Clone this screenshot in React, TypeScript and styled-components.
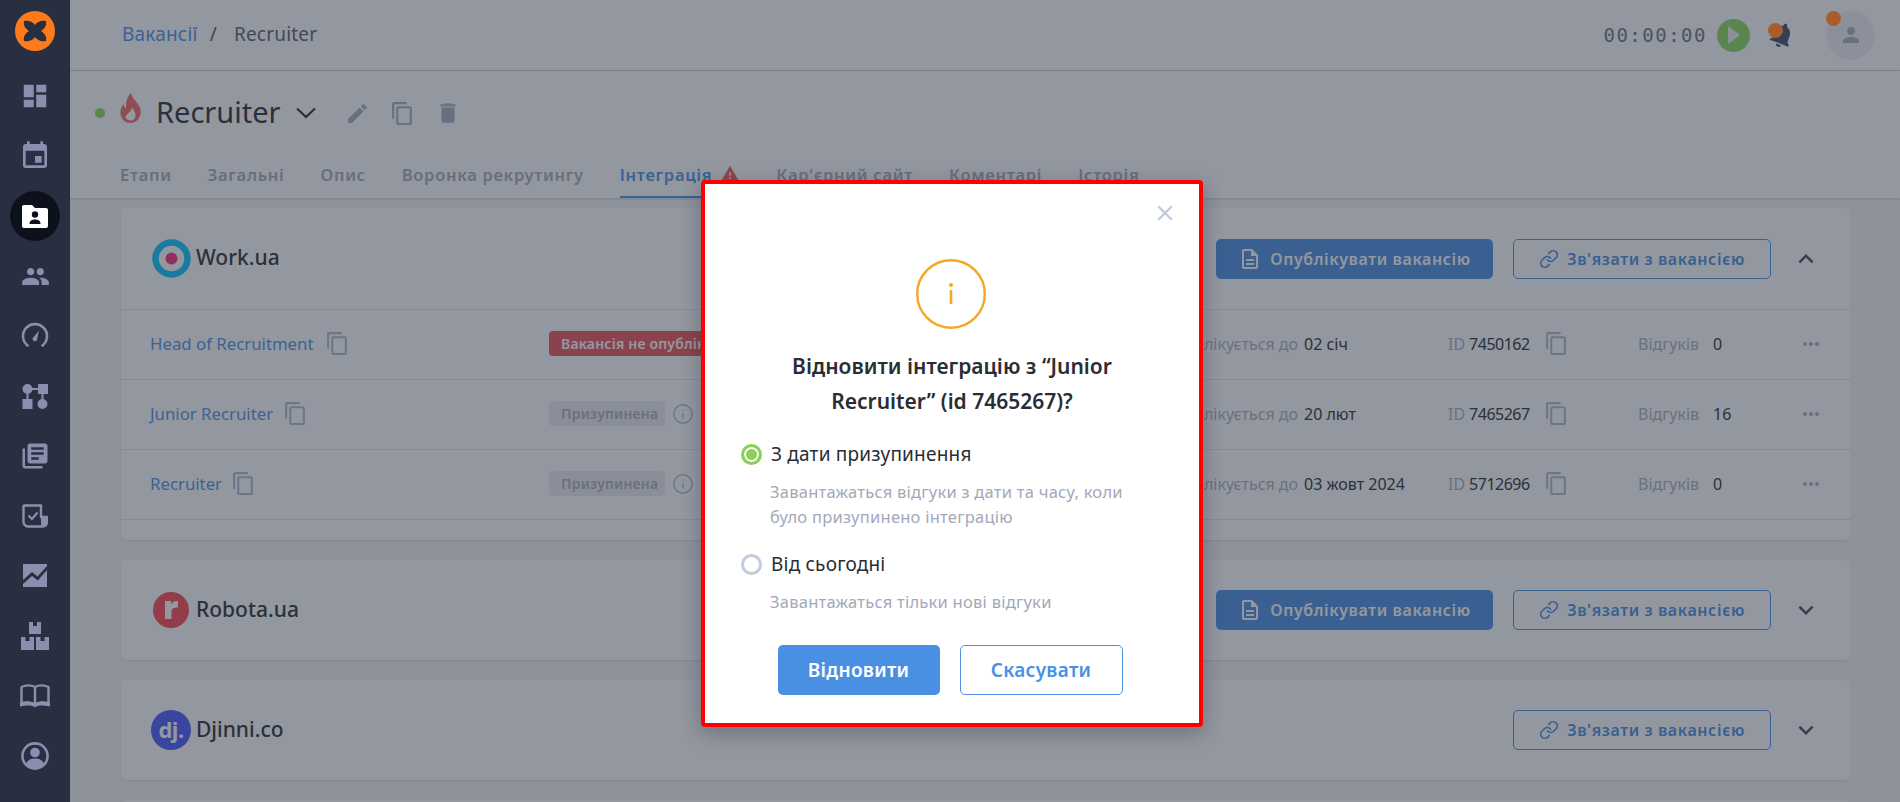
import React from "react";
import styled, { createGlobalStyle } from "styled-components";
import {
  MdDashboard, MdEvent, MdPeople, MdLibraryBooks,
  MdContentCopy, MdEdit, MdDelete, MdExpandMore, MdExpandLess, MdWarning, MdNotifications,
  MdPerson, MdOutlineDescription, MdMoreHoriz, MdClose,
} from "react-icons/md";
import { Link as LinkIcon, Info } from "lucide-react";

const FONT = `"Noto Sans", "Open Sans", sans-serif`;

const Global = createGlobalStyle`
  html, body { margin: 0; padding: 0; height: 100%; overflow: hidden; }
  body { font-family: ${FONT}; color: #2e3136; background: #f4f5f6; }
  * { box-sizing: border-box; }
`;

const Page = styled.div`
  position: relative;
  display: flex;
  width: 1900px;
  height: 802px;
  overflow: hidden;
`;

const Sidebar = styled.nav`
  position: relative;
  z-index: 4;
  flex: 0 0 70px;
  display: flex;
  flex-direction: column;
  align-items: center;
  background: #282f40;
  color: #8b8fad;
`;

const LogoWrap = styled.div`
  height: 66px;
  padding-top: 11px;
`;

const NavItem = styled.div<{ $active?: boolean }>`
  width: 50px;
  height: 50px;
  margin: 5px 0;
  flex: none;
  display: flex;
  align-items: center;
  justify-content: center;
  border-radius: 50%;
  background: ${(p) => (p.$active ? "#0d111c" : "transparent")};
  color: ${(p) => (p.$active ? "#ffffff" : "inherit")};
`;

const Main = styled.div`
  flex: 1;
  min-width: 0;
  display: flex;
  flex-direction: column;
`;

const TopBar = styled.header`
  flex: none;
  height: 71px;
  display: flex;
  align-items: center;
  padding: 0 25px 0 52px;
  background: #fff;
  border-bottom: 1px solid #d0d3dc;
`;

const Crumbs = styled.div`
  display: flex;
  align-items: center;
  font-size: 19px;
  letter-spacing: 0.2px;
  padding-bottom: 2px;
  flex: 1;
`;
const CrumbLink = styled.span`
  color: #4f94e8;
`;
const CrumbSep = styled.span`
  margin: 0 17px 0 12px;
  color: #555b6b;
`;
const CrumbCurrent = styled.span`
  color: #5d6372;
`;

const Timer = styled.span`
  font-family: "DejaVu Sans Mono", monospace;
  font-size: 19px;
  letter-spacing: 1.5px;
  color: #6e7482;
`;

const PlayButton = styled.div`
  width: 33px;
  height: 33px;
  margin-left: 10px;
  border-radius: 50%;
  background: #8edb5f;
  display: flex;
  align-items: center;
  justify-content: center;
  color: #eef1f2;
`;

const Bell = styled.div`
  position: relative;
  width: 30px;
  height: 32px;
  margin-left: 17px;
  color: #42506a;
  display: flex;
  align-items: center;
  justify-content: center;
  svg { transform: rotate(20deg); }
`;

const Dot = styled.span`
  position: absolute;
  z-index: 5;
  width: 15px;
  height: 15px;
  border-radius: 50%;
  background: #ab5c2d;
`;
const BellDot = styled(Dot)`
  left: 1px;
  top: 4px;
`;
const AvatarDot = styled(Dot)`
  left: 0;
  top: 0;
`;

const Avatar = styled.div`
  position: relative;
  width: 49px;
  height: 49px;
  margin-left: 29px;
  border-radius: 50%;
  background: #f0f1f4;
  color: #a9afbf;
  display: flex;
  align-items: center;
  justify-content: center;
`;

const TitleSection = styled.section`
  position: relative;
  flex: none;
  height: 127px;
  padding-top: 20px;
  background: #fff;
  box-shadow: 0 1px 3px rgba(30, 40, 60, 0.2);
`;

const TitleRow = styled.div`
  display: flex;
  align-items: center;
  height: 44px;
  padding-left: 25px;
`;

const StatusDot = styled.span`
  width: 10px;
  height: 10px;
  border-radius: 50%;
  background: #8edb5f;
`;

const Flame = styled.svg`
  margin: -10px 15px 0 15px;
  color: #f46a6c;
`;

const Title = styled.h1`
  margin: -2px 0 0;
  font-size: 29px;
  line-height: 44px;
  font-weight: 400;
  color: #2e3136;
`;

const TitleChevron = styled.svg`
  margin-left: 15px;
  margin-right: 29px;
`;

const TitleAction = styled.span`
  display: flex;
  margin-right: 20px;
  color: #a9afc0;
`;

const Tabs = styled.div`
  display: flex;
  gap: 36px;
  margin: 17px 0 0 50px;
  height: 46px;
`;

const Tab = styled.div<{ $active?: boolean }>`
  display: flex;
  align-items: center;
  gap: 8px;
  font-size: 16.5px;
  font-weight: 600;
  letter-spacing: 0.7px;
  color: ${(p) => (p.$active ? "#4f94e8" : "#a6acbd")};
  border-bottom: 2px solid ${(p) => (p.$active ? "#4f94e8" : "transparent")};
`;

const WarningMark = styled.span`
  display: flex;
  color: #ff5a5a;
`;

const Content = styled.div`
  flex: 1;
  display: flex;
  flex-direction: column;
  gap: 20px;
  padding: 10px 49px 0 51px;
  background: #f4f5f6;
`;

const Card = styled.article`
  flex: none;
  background: #fff;
  border-radius: 6px;
  box-shadow: 0 1px 2px rgba(30, 40, 60, 0.12);
`;

const CardHeader = styled.div<{ $divided?: boolean }>`
  height: ${(p) => (p.$divided ? "102px" : "100px")};
  display: flex;
  align-items: center;
  padding: 0 20px 0 30px;
  border-bottom: ${(p) => (p.$divided ? "1px solid #e2e5ec" : "none")};
`;

const LogoBox = styled.div`
  width: 40px;
  display: flex;
  justify-content: center;
  margin-right: 5px;
`;

const CardName = styled.div`
  flex: 1;
  font-size: 21px;
  font-weight: 500;
  margin-top: -3px;
  color: #2e3136;
`;

const PrimaryButton = styled.button`
  width: 277px;
  height: 40px;
  margin-right: 20px;
  display: flex;
  align-items: center;
  justify-content: center;
  gap: 8px;
  border: 0;
  border-radius: 5px;
  background: #4a90e2;
  color: #fff;
  font: 600 16px ${FONT};
  letter-spacing: 0.6px;
`;

const OutlineButton = styled.button`
  width: 258px;
  height: 40px;
  display: flex;
  align-items: center;
  justify-content: center;
  gap: 8px;
  border: 1px solid #4a90e2;
  border-radius: 5px;
  background: #fff;
  color: #4a90e2;
  font: 600 16px ${FONT};
  letter-spacing: 0.6px;
`;

const Expand = styled.div`
  width: 50px;
  margin-left: 10px;
  display: flex;
  justify-content: center;
  color: #4a4f5c;
`;

const Rows = styled.div`
  padding-bottom: 20px;
`;

const Row = styled.div`
  height: 70px;
  display: grid;
  grid-template-columns: 398px 597px 302px 190px 161px 1fr;
  align-items: center;
  padding: 0 0 2px 30px;
  border-bottom: 1px solid #e2e5ec;
  font-size: 16px;
`;

const Cell = styled.div`
  display: flex;
  align-items: center;
  min-width: 0;
  white-space: nowrap;
`;

const RowLink = styled.span`
  margin-left: -1px;
  color: #4f94e8;
  font-size: 16.8px;
`;

const CopyIcon = styled.span<{ $gap: number }>`
  display: flex;
  margin-left: ${(p) => p.$gap}px;
  color: #b4bace;
`;

const Badge = styled.span<{ $danger?: boolean }>`
  display: inline-block;
  height: 25px;
  line-height: 25px;
  padding: 0 12px;
  width: ${(p) => (p.$danger ? "210px" : "116px")};
  border-radius: 4px;
  background: ${(p) => (p.$danger ? "#ec575c" : "#ecedf0")};
  color: ${(p) => (p.$danger ? "#fff" : "#acb1be")};
  font-size: 14px;
  font-weight: 600;
  letter-spacing: 0.2px;
  overflow: hidden;
`;

const InfoMark = styled.span`
  display: flex;
  margin-left: 7px;
  color: #b4bace;
`;

const Muted = styled.span<{ $w?: number }>`
  color: #acb2c3;
  ${(p) => (p.$w ? `width: ${p.$w}px; text-align: right;` : "")}
`;

const Value = styled.span<{ $gap: number }>`
  margin-left: ${(p) => p.$gap}px;
  color: #2e3136;
`;

const IdValue = styled(Value)`
  letter-spacing: -0.5px;
`;

const MoreIcon = styled.span`
  display: flex;
  color: #a9afc4;
`;

const Overlay = styled.div`
  position: absolute;
  inset: 0;
  z-index: 3;
  display: flex;
  justify-content: center;
  align-items: flex-start;
  padding: 180px 0 0 4px;
  background: rgba(40, 47, 64, 0.5);
`;

const Modal = styled.div`
  position: relative;
  width: 502px;
  height: 547px;
  border: 4px solid #ff0000;
  border-radius: 4px;
  background: #fff;
  padding-top: 75px;
  box-shadow: 0 6px 20px rgba(20, 25, 40, 0.3);
`;

const Close = styled.span`
  position: absolute;
  right: 21px;
  top: 16px;
  display: flex;
  color: #bcc8dc;
`;

const ModalIcon = styled.div`
  display: flex;
  justify-content: center;
  padding-right: 3px;
`;

const ModalTitle = styled.h2`
  margin: 20px 0 23px;
  text-align: center;
  font-size: 21px;
  line-height: 35px;
  font-weight: 600;
  color: #2a2d33;
`;

const Option = styled.div`
  padding: 0 36px;
  margin-bottom: 23px;
`;

const OptionHead = styled.div`
  display: flex;
  align-items: center;
  gap: 9px;
  height: 24px;
  font-size: 19px;
  letter-spacing: 0.2px;
  color: #2a2d33;
`;

const Radio = styled.span<{ $checked?: boolean }>`
  flex: none;
  width: 21px;
  height: 21px;
  border-radius: 50%;
  border: 3px solid ${(p) => (p.$checked ? "#8cd05a" : "#c3cbdd")};
  background: ${(p) => (p.$checked ? "#8cd05a" : "#fff")};
  box-shadow: ${(p) => (p.$checked ? "inset 0 0 0 2px #fff" : "none")};
`;

const OptionDesc = styled.p`
  margin: 13px 0 0 29px;
  font-size: 16.5px;
  letter-spacing: 0.25px;
  line-height: 25px;
  color: #a2a9b8;
`;

const ModalActions = styled.div`
  display: flex;
  justify-content: center;
  gap: 20px;
  margin-top: 31px;
  padding-right: 4px;
`;

const ModalPrimary = styled.button`
  width: 162px;
  height: 50px;
  border: 0;
  border-radius: 5px;
  background: #4a90e2;
  color: #fff;
  font: 600 19px ${FONT};
  letter-spacing: 0.3px;
`;

const ModalSecondary = styled.button`
  width: 163px;
  height: 50px;
  border: 1px solid #4a90e2;
  border-radius: 5px;
  background: #fff;
  color: #4a90e2;
  font: 600 19px ${FONT};
  letter-spacing: 0.3px;
`;

const LogoMark = () => (
  <svg width="40" height="40" viewBox="0 0 40 40">
    <circle cx="20" cy="20" r="20" fill="#ff7a1a" />
    <path
      fill="#282f40"
      d="M9 10C14 9 18 11 20 14C22 11 26 9 31 10C32 15 29 18 26 20C29 22 32 25 31 30C26 31 22 29 20 26C18 29 14 31 9 30C8 25 11 22 14 20C11 18 8 15 9 10Z"
    />
  </svg>
);

const FolderIcon = () => (
  <svg width="26" height="23" viewBox="0 0 26 23">
    <path
      fill="currentColor"
      d="M2 0H10L13 3H24C25.100 3 26 3.900 26 5V21C26 22.100 25.100 23 24 23H2C0.900 23 0 22.100 0 21V2C0 0.900 0.900 0 2 0Z"
    />
    <circle cx="13" cy="9.500" r="3.200" fill="#0d111c" />
    <path d="M7.500 19C7.500 15.500 10 14.500 13 14.500C16 14.500 18.500 15.500 18.500 19Z" fill="#0d111c" />
  </svg>
);

const GaugeIcon = () => (
  <svg width="28" height="28" viewBox="0 0 28 28" fill="none">
    <path d="M6.5 23.5A12 12 0 1 1 21.5 23.5" stroke="currentColor" strokeWidth="2.6" strokeLinecap="round" />
    <path d="M11.5 16.5L18 8.5L15.8 18.2A2.4 2.4 0 0 1 11.5 16.5Z" fill="currentColor" />
  </svg>
);

const HubIcon = () => (
  <svg width="26" height="28" viewBox="0 0 26 28" fill="currentColor">
    <circle cx="5.5" cy="7" r="5" />
    <rect x="16" y="2" width="10" height="10" />
    <rect x="5" y="6" width="12" height="2" />
    <rect x="4.5" y="10" width="2" height="8" />
    <rect x="19.5" y="10" width="2" height="8" />
    <rect x="0.5" y="17" width="10" height="10" />
    <circle cx="20.5" cy="22" r="5" />
  </svg>
);

const TaskIcon = () => (
  <svg width="26" height="24" viewBox="0 0 26 24" fill="none">
    <path d="M2 1.5H19V13H25V17C25 20.5 23 22.5 20 22.5H6C3.5 22.5 1.5 20.5 1.5 18V2Z" stroke="currentColor" strokeWidth="2.4" strokeLinejoin="round" />
    <path d="M19 13H25V17C25 20.5 23 22.5 20 22.5C19 22.5 19 20 19 18Z" fill="currentColor" />
    <path d="M6.5 11.5L10 15L15.5 8.5" stroke="currentColor" strokeWidth="2.2" />
  </svg>
);

const ChartIcon = () => (
  <svg width="24" height="24" viewBox="0 0 24 24" fill="currentColor">
    <path d="M0 0H24V2L14.5 12.5L9 8L0 16Z" />
    <path d="M24 6V23H0V20L9 12L14.8 16.5Z" />
  </svg>
);

const BoxesIcon = () => (
  <svg width="28" height="28" viewBox="0 0 28 28" fill="currentColor">
    <path d="M8 0H12V4H16V0H20V12H8Z" />
    <path d="M0 15H4.5V19H8.5V15H13V28H0Z" />
    <path d="M15 15H19.5V19H23.5V15H28V28H15Z" />
  </svg>
);

const BookIcon = () => (
  <svg width="30" height="24" viewBox="0 0 30 24">
    <path
      fill="none"
      stroke="currentColor"
      strokeWidth="2.4"
      strokeLinejoin="round"
      d="M1.500 3C6 1 11 1 15 3C19 1 24 1 28.500 3V20C24 18.500 19 18.500 15 20.500C11 18.500 6 18.500 1.500 20ZM15 3V20.500"
    />
    <path fill="currentColor" d="M0 18C6 16.500 11 17 15 19C19 17 24 16.500 30 18V22.500C24 21 19 21 16 22.500L15 23.500L14 22.500C11 21 6 21 0 22.500Z" />
  </svg>
);

const AccountIcon = () => (
  <svg width="28" height="28" viewBox="0 0 28 28">
    <circle cx="14" cy="14" r="12.6" fill="none" stroke="currentColor" strokeWidth="2.6" />
    <circle cx="14" cy="10.5" r="4.8" fill="currentColor" />
    <path d="M5 21.5C7 17.5 10.5 16.5 14 16.5C17.5 16.5 21 17.5 23 21.5C21 24.5 17.5 26 14 26C10.5 26 7 24.5 5 21.5Z" fill="currentColor" />
  </svg>
);

const WorkLogo = () => (
  <svg width="39" height="39" viewBox="0 0 39 39">
    <circle cx="19.5" cy="19.5" r="16" fill="#fff" stroke="#0cc5ff" strokeWidth="6.5" />
    <circle cx="19.5" cy="19.5" r="6" fill="#ff2f7f" />
  </svg>
);

const RobotaLogo = () => (
  <svg width="36" height="36" viewBox="0 0 36 36">
    <circle cx="18" cy="18" r="18" fill="#ff4a55" />
    <path d="M12 9H18V12C19.5 10 21.500 9 25 9V15.500C21 15.500 18.500 16.500 18.500 20V27H12Z" fill="#fff" />
  </svg>
);

const DjinniMark = styled.div`
  width: 40px;
  height: 40px;
  border-radius: 50%;
  background: #4c5bff;
  color: #fff;
  font-size: 22px;
  font-weight: 700;
  line-height: 38px;
  letter-spacing: -0.5px;
  text-align: center;
`;

const PublishBtn = () => (
  <PrimaryButton>
    <MdOutlineDescription size={24} />
    Опублікувати вакансію
  </PrimaryButton>
);

const LinkBtn = () => (
  <OutlineButton>
    <LinkIcon size={20} />
    Зв'язати з вакансією
  </OutlineButton>
);

const rows = [
  { name: "Head of Recruitment", gap: 11, badge: "Вакансія не опублікована", danger: true, until: "02 січ", id: "7450162", count: "0" },
  { name: "Junior Recruiter", gap: 10, badge: "Призупинена", danger: false, until: "20 лют", id: "7465267", count: "16" },
  { name: "Recruiter", gap: 9, badge: "Призупинена", danger: false, until: "03 жовт 2024", id: "5712696", count: "0" },
];

const tabs = ["Етапи", "Загальні", "Опис", "Воронка рекрутингу"];

export default function App() {
  return (
    <Page>
      <Global />
      <Sidebar>
        <LogoWrap><LogoMark /></LogoWrap>
        <NavItem><MdDashboard size={30} /></NavItem>
        <NavItem><MdEvent size={32} /></NavItem>
        <NavItem $active><FolderIcon /></NavItem>
        <NavItem><MdPeople size={29} /></NavItem>
        <NavItem><GaugeIcon /></NavItem>
        <NavItem><HubIcon /></NavItem>
        <NavItem><MdLibraryBooks size={30} /></NavItem>
        <NavItem><TaskIcon /></NavItem>
        <NavItem><ChartIcon /></NavItem>
        <NavItem><BoxesIcon /></NavItem>
        <NavItem><BookIcon /></NavItem>
        <NavItem><AccountIcon /></NavItem>
      </Sidebar>
      <Main>
        <TopBar>
          <Crumbs>
            <CrumbLink>Вакансії</CrumbLink>
            <CrumbSep>/</CrumbSep>
            <CrumbCurrent>Recruiter</CrumbCurrent>
          </Crumbs>
          <Timer>00:00:00</Timer>
          <PlayButton>
            <svg width="14" height="18" viewBox="0 0 14 18"><path d="M1 0L13 9L1 18Z" fill="currentColor" /></svg>
          </PlayButton>
          <Bell>
            <MdNotifications size={32} />
            <BellDot />
          </Bell>
          <Avatar>
            <MdPerson size={24} />
            <AvatarDot />
          </Avatar>
        </TopBar>
        <TitleSection>
          <TitleRow>
            <StatusDot />
            <Flame width="21" height="30" viewBox="0 0 21 30">
              <path
                fill="currentColor"
                fillRule="evenodd"
                d="M11 0C12 5 16 8 18.500 12C20.500 15 21 18 20.500 21C19.500 26 15.500 30 10.500 30C5.500 30 1.500 26.500 0.500 21.500C0 18 1 14 3.500 11C4 13 4.500 14.500 6 15.500C5.500 10 7 4 11 0ZM10.500 27.500C13.500 27.500 15.500 25.500 15.500 22.500C15.500 19.500 14 17.500 12 14.500C11.500 17.500 10 18.500 8.500 20C6.500 21.500 5.500 23 5.500 24.500C6.500 26.500 8.500 27.500 10.500 27.500Z"
              />
            </Flame>
            <Title>Recruiter</Title>
            <TitleChevron width="20" height="12" viewBox="0 0 20 12" fill="none">
              <path d="M1 1.500L10 10L19 1.500" stroke="#2e3136" strokeWidth="2.2" />
            </TitleChevron>
            <TitleAction><MdEdit size={25} /></TitleAction>
            <TitleAction><MdContentCopy size={25} /></TitleAction>
            <TitleAction><MdDelete size={26} /></TitleAction>
          </TitleRow>
          <Tabs>
            {tabs.map((t) => <Tab key={t}>{t}</Tab>)}
            <Tab $active>Інтеграція<WarningMark><MdWarning size={20} /></WarningMark></Tab>
            <Tab>Кар'єрний сайт</Tab>
            <Tab>Коментарі</Tab>
            <Tab>Історія</Tab>
          </Tabs>
        </TitleSection>
        <Content>
          <Card>
            <CardHeader $divided>
              <LogoBox><WorkLogo /></LogoBox>
              <CardName>Work.ua</CardName>
              <PublishBtn />
              <LinkBtn />
              <Expand><MdExpandLess size={30} /></Expand>
            </CardHeader>
            <Rows>
              {rows.map((r) => (
                <Row key={r.id}>
                  <Cell>
                    <RowLink>{r.name}</RowLink>
                    <CopyIcon $gap={r.gap}><MdContentCopy size={25} /></CopyIcon>
                  </Cell>
                  <Cell>
                    <Badge $danger={r.danger}>{r.badge}</Badge>
                    {!r.danger && <InfoMark><Info size={22} strokeWidth={1.6} /></InfoMark>}
                  </Cell>
                  <Cell>
                    <Muted $w={152}>Публікується до</Muted>
                    <Value $gap={6}>{r.until}</Value>
                  </Cell>
                  <Cell>
                    <Muted>ID</Muted>
                    <IdValue $gap={4}>{r.id}</IdValue>
                    <CopyIcon $gap={14}><MdContentCopy size={25} /></CopyIcon>
                  </Cell>
                  <Cell>
                    <Muted>Відгуків</Muted>
                    <Value $gap={14}>{r.count}</Value>
                  </Cell>
                  <Cell><MoreIcon><MdMoreHoriz size={24} /></MoreIcon></Cell>
                </Row>
              ))}
            </Rows>
          </Card>
          <Card>
            <CardHeader>
              <LogoBox><RobotaLogo /></LogoBox>
              <CardName>Robota.ua</CardName>
              <PublishBtn />
              <LinkBtn />
              <Expand><MdExpandMore size={30} /></Expand>
            </CardHeader>
          </Card>
          <Card>
            <CardHeader>
              <LogoBox><DjinniMark>dj.</DjinniMark></LogoBox>
              <CardName>Djinni.co</CardName>
              <LinkBtn />
              <Expand><MdExpandMore size={30} /></Expand>
            </CardHeader>
          </Card>
          <Card>
            <CardHeader />
          </Card>
        </Content>
      </Main>
      <Overlay>
        <Modal>
          <Close><MdClose size={26} /></Close>
          <ModalIcon>
            <svg width="70" height="70" viewBox="0 0 70 70" fill="none">
              <circle cx="35" cy="35" r="33.800" stroke="#f5a623" strokeWidth="2.4" />
              <circle cx="35" cy="26" r="2" fill="#f5a623" />
              <path d="M35 31V45" stroke="#f5a623" strokeWidth="2.600" />
            </svg>
          </ModalIcon>
          <ModalTitle>Відновити інтеграцію з “Junior<br />Recruiter” (id 7465267)?</ModalTitle>
          <Option>
            <OptionHead><Radio $checked />З дати призупинення</OptionHead>
            <OptionDesc>Завантажаться відгуки з дати та часу, коли<br />було призупинено інтеграцію</OptionDesc>
          </Option>
          <Option>
            <OptionHead><Radio />Від сьогодні</OptionHead>
            <OptionDesc>Завантажаться тільки нові відгуки</OptionDesc>
          </Option>
          <ModalActions>
            <ModalPrimary>Відновити</ModalPrimary>
            <ModalSecondary>Скасувати</ModalSecondary>
          </ModalActions>
        </Modal>
      </Overlay>
    </Page>
  );
}
